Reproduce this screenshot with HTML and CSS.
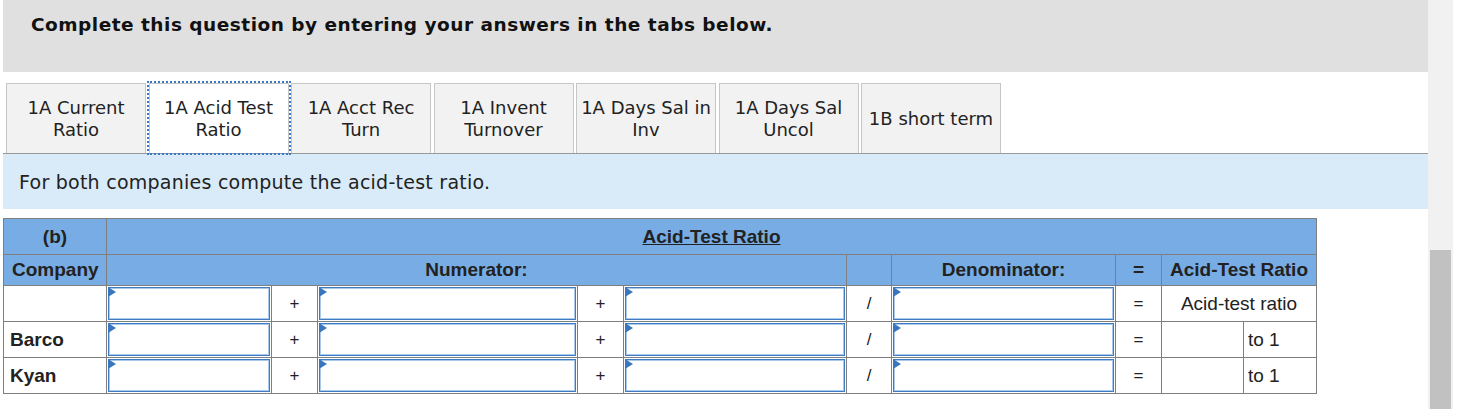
FILE: index.html
```html
<!DOCTYPE html>
<html>
<head>
<meta charset="utf-8">
<link rel="stylesheet" href="styles.css">
</head>
<body>
<div class="page">
  <div class="main">
    <div class="header">
      <h1 class="title">Complete this question by entering your answers in the tabs below.</h1>
    </div>
    <div class="tabs">
      <div class="tab">1A Current<br>Ratio</div>
      <div class="tab active">1A Acid Test<br>Ratio</div>
      <div class="tab">1A Acct Rec<br>Turn</div>
      <div class="tab">1A Invent<br>Turnover</div>
      <div class="tab">1A Days Sal in<br>Inv</div>
      <div class="tab">1A Days Sal<br>Uncol</div>
      <div class="tab">1B short term</div>
    </div>
    <div class="instr">For both companies compute the acid-test ratio.</div>
    <table class="grid">
      <colgroup>
        <col class="c-co"><col class="c-in1"><col class="c-op"><col class="c-in2"><col class="c-op"><col class="c-in3"><col class="c-op2"><col class="c-in4"><col class="c-op"><col class="c-r1"><col class="c-r2">
      </colgroup>
      <tr class="hd hd1">
        <th>(b)</th>
        <th colspan="10"><u>Acid-Test Ratio</u></th>
      </tr>
      <tr class="hd hd2">
        <th>Company</th>
        <th colspan="5">Numerator:</th>
        <th></th>
        <th>Denominator:</th>
        <th>=</th>
        <th colspan="2">Acid-Test Ratio</th>
      </tr>
      <tr class="row">
        <td class="co"></td>
        <td class="inp"><div class="box"></div></td>
        <td class="op">+</td>
        <td class="inp"><div class="box"></div></td>
        <td class="op">+</td>
        <td class="inp"><div class="box"></div></td>
        <td class="op">/</td>
        <td class="inp"><div class="box"></div></td>
        <td class="op">=</td>
        <td colspan="2" class="lbl">Acid-test ratio</td>
      </tr>
      <tr class="row">
        <td class="co">Barco</td>
        <td class="inp"><div class="box"></div></td>
        <td class="op">+</td>
        <td class="inp"><div class="box"></div></td>
        <td class="op">+</td>
        <td class="inp"><div class="box"></div></td>
        <td class="op">/</td>
        <td class="inp"><div class="box"></div></td>
        <td class="op">=</td>
        <td class="res"></td>
        <td class="to">to 1</td>
      </tr>
      <tr class="row">
        <td class="co">Kyan</td>
        <td class="inp"><div class="box"></div></td>
        <td class="op">+</td>
        <td class="inp"><div class="box"></div></td>
        <td class="op">+</td>
        <td class="inp"><div class="box"></div></td>
        <td class="op">/</td>
        <td class="inp"><div class="box"></div></td>
        <td class="op">=</td>
        <td class="res"></td>
        <td class="to">to 1</td>
      </tr>
    </table>
  </div>
  <div class="scrollbar"><div class="thumb"></div></div>
</div>
</body>
</html>
```
FILE: styles.css
```css
html, body {
  margin: 0;
  padding: 0;
  background: #fff;
}
.page {
  display: flex;
  width: 1458px;
  height: 409px;
  overflow: hidden;
}
.main {
  margin-left: 3px;
  width: 1425px;
  flex: none;
}
.header {
  height: 72px;
  background: #e0e0e0;
  box-sizing: border-box;
  padding: 14px 0 0 28px;
}
.title {
  margin: 0;
  font-family: "DejaVu Sans", Verdana, sans-serif;
  font-weight: bold;
  font-size: 18.5px;
  letter-spacing: 0.5px;
  line-height: 22px;
  color: #111;
}
.tabs {
  margin-top: 11px;
  display: flex;
  gap: 2.5px;
  padding-left: 3px;
  border-bottom: 1px solid #9a9a9a;
}
.tab {
  width: 140px;
  height: 70px;
  box-sizing: border-box;
  border: 1px solid #c6c6c6;
  border-bottom: none;
  background: #f2f2f2;
  display: flex;
  align-items: center;
  justify-content: center;
  text-align: center;
  font-family: "DejaVu Sans", Verdana, sans-serif;
  font-size: 18px;
  line-height: 22px;
  color: #222;
}
.tab.active {
  background: #fff;
  outline: 2px dotted #3a78c4;
}
.instr {
  height: 55px;
  background: #d9ebf9;
  display: flex;
  align-items: center;
  padding-left: 16px;
  font-family: "DejaVu Sans", Verdana, sans-serif;
  font-size: 19px;
  letter-spacing: 0.25px;
  color: #222;
}
.grid {
  margin-top: 9px;
  border-collapse: collapse;
  table-layout: fixed;
  width: 1313px;
  font-family: "Liberation Sans", Arial, sans-serif;
  color: #222;
}
.c-co { width: 103px; }
.c-in1 { width: 165px; }
.c-op { width: 46px; }
.c-in2 { width: 260px; }
.c-in3 { width: 223px; }
.c-op2 { width: 45px; }
.c-in4 { width: 224px; }
.c-r1 { width: 82px; }
.c-r2 { width: 73px; }
.grid th, .grid td {
  border: 1px solid #7f7f7f;
  padding: 0;
}
.hd th {
  background: #78ace4;
  font-weight: bold;
  font-size: 19px;
  text-align: center;
  color: #222;
}
.hd1 th { height: 35px; }
.hd2 th { height: 30px; }
.hd2 th:first-child { text-align: left; padding-left: 8px; }
.co {
  font-weight: bold;
  font-size: 19px;
  padding-left: 6px !important;
}
.op {
  text-align: center;
  font-size: 17px;
}
.inp {
  padding: 1px !important;
}
.box {
  position: relative;
  height: 33px;
  box-sizing: border-box;
  border: 1px solid #3f7cc3;
  box-shadow: inset 0 0 0 1px #a9c9ec;
  background: #fff;
}
.box::before {
  content: "";
  position: absolute;
  left: -1px;
  top: -1px;
  border-left: 8px solid #3a76be;
  border-top: 5px solid transparent;
  border-bottom: 5px solid transparent;
}
.lbl {
  text-align: center;
  font-size: 19px;
}
.to {
  font-size: 19px;
  padding-left: 4px !important;
}
.scrollbar {
  width: 25px;
  height: 409px;
  background: #f1f1f1;
  flex: none;
  box-sizing: border-box;
  padding: 250px 2px 0 2px;
}
.thumb {
  height: 160px;
  background: #c1c1c1;
}
```
